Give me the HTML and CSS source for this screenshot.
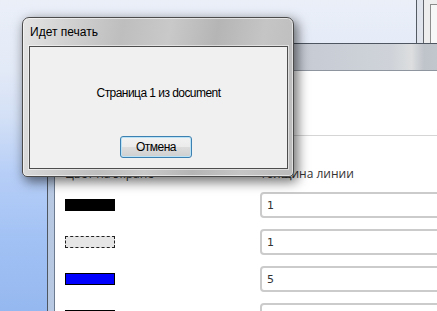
FILE: index.html
```html
<!DOCTYPE html>
<html lang="ru">
<head>
    <meta charset="UTF-8">
    <title>Идет печать</title>
    <link rel="stylesheet" href="styles.css">
</head>
<body>
    <div class="desktop">
        <div class="window-far">
            <div class="far-inner">
                <div class="far-child"></div>
            </div>
        </div>

        <div class="window-main">
            <div class="main-body">
                <div class="main-top"></div>
                <div class="lines">
                    <div class="lines-head">Цвет на экране</div>
                    <div class="lines-head">Толщина линии</div>

                    <span class="swatch swatch-black"></span>
                    <input class="width-input" type="text" value="1">

                    <span class="swatch swatch-dashed"></span>
                    <input class="width-input" type="text" value="1">

                    <span class="swatch swatch-blue"></span>
                    <input class="width-input" type="text" value="5">

                    <span class="swatch swatch-black"></span>
                    <input class="width-input" type="text" value="1">
                </div>
            </div>
        </div>

        <div class="dialog">
            <div class="dialog-title">Идет печать</div>
            <div class="dialog-client">
                <p class="dialog-text">Страница 1 из document</p>
                <button class="dialog-button" type="button">Отмена</button>
            </div>
        </div>
    </div>
</body>
</html>
```

FILE: styles.css
```css
body {
    margin: 0;
    width: 437px;
    height: 311px;
    overflow: hidden;
}

.desktop {
    position: relative;
    width: 437px;
    height: 311px;
    overflow: hidden;
    font-family: "Liberation Sans", Arial, sans-serif;
    background: linear-gradient(to bottom, #eaeff8 0%, #e3eaf7 22%, #d3e0f6 38%, #b6cef7 56%, #a1c1f4 78%, #95b8f0 100%);
}

/* window peeking in at the top right */
.window-far {
    position: absolute;
    left: 416px;
    top: -10px;
    width: 40px;
    height: 60px;
    box-sizing: border-box;
    border: 1px solid #555b63;
    padding-left: 6px;
    background: linear-gradient(to right, #dfe4ec, #eef1f6);
}

.far-inner {
    height: 100%;
    box-sizing: border-box;
    border-left: 1px solid #62666c;
    padding: 13px 0 0 6px;
    background: #eeeeee;
}

.far-child {
    height: 100%;
    border: 1px solid #8c8c8c;
    background: #f7f7f7;
}

/* main window behind the dialog */
.window-main {
    position: absolute;
    left: 47px;
    top: 43px;
    width: 420px;
    height: 300px;
    box-sizing: border-box;
    border: 1px solid #4e5661;
    padding: 26px 0 0 6px;
    display: flex;
    background:
        linear-gradient(to right, #c9ced7 0%, #c6cbd4 60%, #cfd3d9 82%, #dcdedf 87%, #bfc3ca 90%, #c8ccd2 100%) top left / 100% 26px no-repeat,
        linear-gradient(to right, #b7c8e2 0%, #d9e2ef 35%, #c2d0e4 70%, #93a3bb 100%);
}

.main-body {
    flex: 1;
    background: #fff;
    border-top: 1px solid #8f959e;
    border-left: 1px solid #6d7b90;
}

.main-top {
    height: 64px;
    border-bottom: 1px solid #d5d5d5;
}

.lines {
    display: grid;
    grid-template-columns: 195px 1fr;
    grid-template-rows: 15px repeat(4, 26px);
    row-gap: 11px;
    padding: 30px 0 0 10px;
    align-items: center;
}

.lines-head {
    align-self: start;
    font-family: "Open Sans", sans-serif;
    font-size: 12px;
    line-height: 16px;
    color: #333;
}

.swatch {
    width: 50px;
    height: 12px;
    box-sizing: border-box;
}

.swatch-black {
    background: #000;
}

.swatch-dashed {
    background: #e6e6e6;
    border: 1px dashed #222;
}

.swatch-blue {
    background: #0000ff;
    border: 1px solid #000;
}

.width-input {
    height: 26px;
    box-sizing: border-box;
    margin: 0;
    border: 2px solid #cbcbcb;
    border-radius: 4px;
    padding: 0 5px;
    background: #fff;
    font-family: "DejaVu Sans", Verdana, sans-serif;
    font-size: 11px;
    color: #333;
    outline: none;
}

/* print progress dialog */
.dialog {
    position: absolute;
    left: 22px;
    top: 17px;
    width: 272px;
    height: 160px;
    box-sizing: border-box;
    border: 1px solid #4b4b4b;
    border-radius: 7px 7px 5px 5px;
    padding: 0 5px 7px 6px;
    display: flex;
    flex-direction: column;
    background: linear-gradient(100deg, #e4e4e4 0%, #d3d3d3 14%, #bebebe 34%, #c9c9c9 50%, #b5b5b5 66%, #c5c5c5 82%, #bbbbbb 100%);
    box-shadow: inset 0 0 0 1px rgba(255, 255, 255, 0.55), 3px 4px 12px 1px rgba(0, 0, 0, 0.55);
}

.dialog-title {
    height: 28px;
    line-height: 28px;
    padding-left: 1px;
    font-size: 12px;
    color: #000;
}

.dialog-client {
    flex: 1;
    display: flex;
    flex-direction: column;
    background: #f0f0f0;
    border: 1px solid #4d4d4d;
    box-shadow: 0 0 0 1px rgba(255, 255, 255, 0.5);
}

.dialog-text {
    margin: 39px 0 0;
    font-size: 12px;
    line-height: 14px;
    letter-spacing: -0.55px;
    text-align: center;
    color: #000;
}

.dialog-button {
    align-self: flex-start;
    margin: 36px 0 0 90px;
    width: 72px;
    height: 22px;
    padding: 0;
    border: 1px solid #3c7fb1;
    border-radius: 3px;
    background: linear-gradient(#f2f2f2 0%, #ebebeb 50%, #dddddd 50%, #cfcfcf 100%);
    box-shadow: inset 0 0 0 1px #b9e2f7;
    font-family: "Liberation Sans", Arial, sans-serif;
    font-size: 12px;
    letter-spacing: -0.5px;
    color: #000;
}
```
